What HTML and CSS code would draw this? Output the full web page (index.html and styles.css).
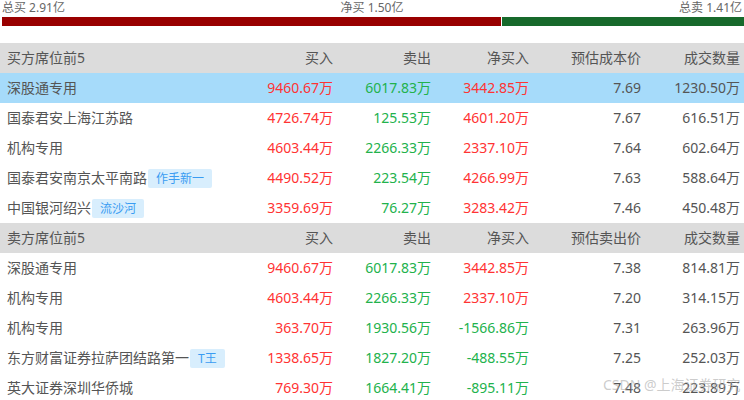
FILE: index.html
```html
<!DOCTYPE html>
<html lang="zh">
<head>
<meta charset="utf-8">
<link rel="stylesheet" href="styles.css">
</head>
<body>
<div class="page">
  <div class="summary">
    <span>总买 2.91亿</span>
    <span>净买 1.50亿</span>
    <span>总卖 1.41亿</span>
  </div>
  <div class="bar">
    <div class="bar-buy" style="flex: 2.91"></div>
    <div class="bar-sell" style="flex: 1.41"></div>
  </div>

  <div class="table">
    <div class="row head">
      <div class="name">买方席位前5</div><div>买入</div><div>卖出</div><div>净买入</div><div>预估成本价</div><div>成交数量</div>
    </div>
    <div class="row active">
      <div class="name">深股通专用</div><div class="up">9460.67万</div><div class="down">6017.83万</div><div class="up">3442.85万</div><div>7.69</div><div>1230.50万</div>
    </div>
    <div class="row">
      <div class="name">国泰君安上海江苏路</div><div class="up">4726.74万</div><div class="down">125.53万</div><div class="up">4601.20万</div><div>7.67</div><div>616.51万</div>
    </div>
    <div class="row">
      <div class="name">机构专用</div><div class="up">4603.44万</div><div class="down">2266.33万</div><div class="up">2337.10万</div><div>7.64</div><div>602.64万</div>
    </div>
    <div class="row">
      <div class="name">国泰君安南京太平南路<span class="tag">作手新一</span></div><div class="up">4490.52万</div><div class="down">223.54万</div><div class="up">4266.99万</div><div>7.63</div><div>588.64万</div>
    </div>
    <div class="row">
      <div class="name">中国银河绍兴<span class="tag">流沙河</span></div><div class="up">3359.69万</div><div class="down">76.27万</div><div class="up">3283.42万</div><div>7.46</div><div>450.48万</div>
    </div>
    <div class="row head">
      <div class="name">卖方席位前5</div><div>买入</div><div>卖出</div><div>净买入</div><div>预估卖出价</div><div>成交数量</div>
    </div>
    <div class="row">
      <div class="name">深股通专用</div><div class="up">9460.67万</div><div class="down">6017.83万</div><div class="up">3442.85万</div><div>7.38</div><div>814.81万</div>
    </div>
    <div class="row">
      <div class="name">机构专用</div><div class="up">4603.44万</div><div class="down">2266.33万</div><div class="up">2337.10万</div><div>7.20</div><div>314.15万</div>
    </div>
    <div class="row">
      <div class="name">机构专用</div><div class="up">363.70万</div><div class="down">1930.56万</div><div class="down">-1566.86万</div><div>7.31</div><div>263.96万</div>
    </div>
    <div class="row">
      <div class="name">东方财富证券拉萨团结路第一<span class="tag">T王</span></div><div class="up">1338.65万</div><div class="down">1827.20万</div><div class="down">-488.55万</div><div>7.25</div><div>252.03万</div>
    </div>
    <div class="row">
      <div class="name">英大证券深圳华侨城</div><div class="up">769.30万</div><div class="down">1664.41万</div><div class="down">-895.11万</div><div>7.48</div><div>223.89万</div>
    </div>
  </div>
  <div class="watermark">CSDN @上海证券研究</div>
</div>
</body>
</html>
```

FILE: styles.css
```css
html, body {
  margin: 0;
  padding: 0;
  background: #ffffff;
}
body {
  font-family: "Noto Sans", "Noto Sans CJK SC", sans-serif;
  color: #555555;
  width: 744px;
  height: 400px;
  overflow: hidden;
}
.page {
  position: relative;
  width: 744px;
  height: 400px;
  overflow: hidden;
}
.summary {
  display: flex;
  justify-content: space-between;
  padding: 0 2px;
  height: 16px;
  font-size: 12px;
  line-height: 15px;
  color: #666666;
}
.bar {
  display: flex;
  gap: 1px;
  margin: 1px 0 0 2px;
  height: 9px;
}
.bar-buy {
  background: #990000;
}
.bar-sell {
  background: #17692b;
}
.table {
  margin-top: 17px;
}
.row {
  display: grid;
  grid-template-columns: 236px 90px 98px 98px 112px 99px;
  padding: 0 4px 0 7px;
  height: 30px;
  line-height: 30px;
  font-size: 14px;
  color: #555555;
}
.row > div {
  text-align: right;
  white-space: nowrap;
}
.row > .name {
  text-align: left;
  display: flex;
  align-items: center;
}
.row.head {
  background: #dcdcdc;
}
.row.active {
  background: #a6dbfa;
}
.up {
  color: #ff3333;
}
.down {
  color: #22b24c;
}
.tag {
  display: inline-block;
  margin-left: 1px;
  padding: 0 8px;
  height: 19px;
  line-height: 19px;
  font-size: 12px;
  color: #3a9cf2;
  background: #d8eefd;
  border-radius: 2px;
}
.watermark {
  position: absolute;
  left: 603px;
  top: 377px;
  font-size: 14px;
  line-height: 16px;
  color: rgba(170, 170, 170, 0.6);
  white-space: nowrap;
}
```
